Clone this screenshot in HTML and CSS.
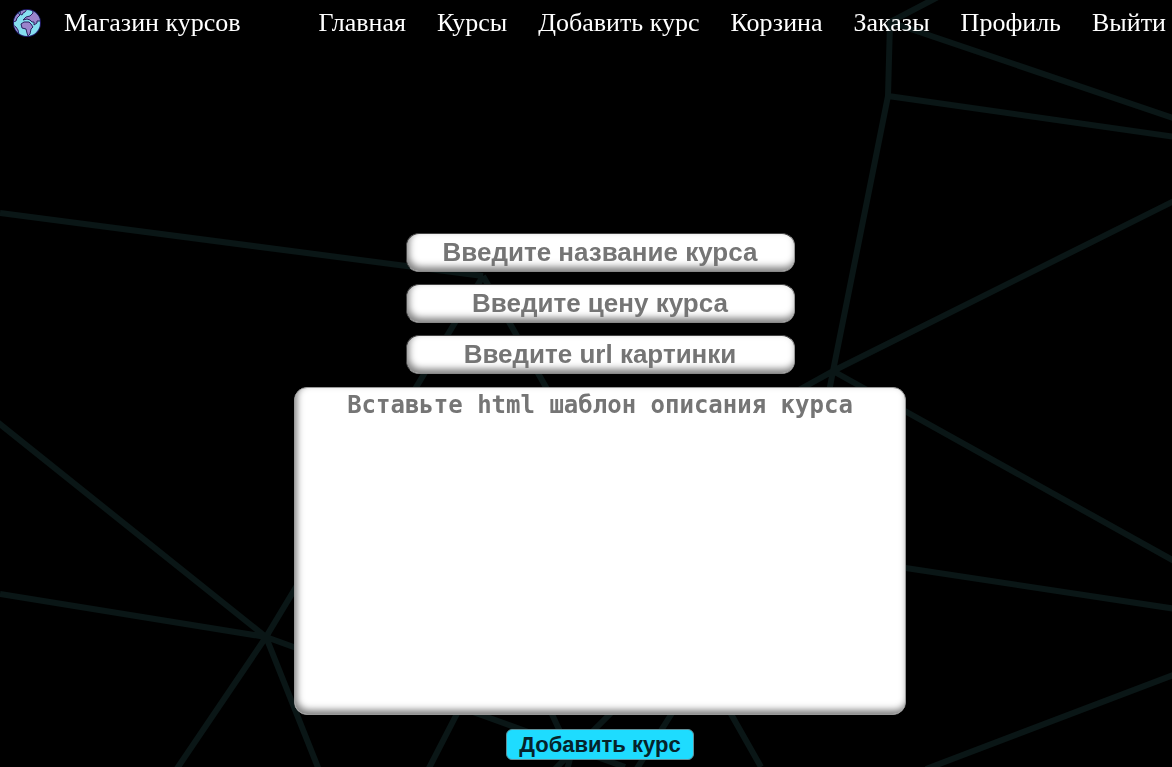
FILE: index.html
```html
<!DOCTYPE html>
<html lang="ru">
<head>
<meta charset="utf-8">
<title>Магазин курсов</title>
<link rel="stylesheet" href="styles.css">
</head>
<body>
<svg class="backdrop" viewBox="0 0 1172 767" preserveAspectRatio="xMidYMid slice" aria-hidden="true">
  <path d="M0 213L483 276M483 276L266 637M483 276L761 767M-4 421L266 637M0 594L266 637L176 770M266 637L319 770M266 637L625 767M464 700L428 770M550 710L571 755L567 770M612 712L555 769M674 710L636 770M938 -3L890 22L888 96L833 371L600 500M890 22L1176 119M888 96L1176 137M833 371L1176 200M833 371L1176 562M833 371L812 480M800 552L1176 609M1176 674L926 769"/>
</svg>
<header class="header">
  <a class="brand" href="#">
    <svg class="logo" viewBox="0 0 30 30" aria-hidden="true">
      <defs><clipPath id="globe"><circle cx="15" cy="15" r="13"/></clipPath></defs>
      <circle cx="15" cy="15" r="14" fill="#211c68"/>
      <circle cx="15" cy="15" r="13" fill="#86def0"/>
      <g clip-path="url(#globe)" fill="#9b84cc" stroke="#29205f" stroke-linejoin="round">
        <path d="M9 1L15 1L13 4L11 5L10 7L8 6Z"/>
        <path d="M2 7L6 5L8 7L5 10L4 13L1 14Z"/>
        <path d="M20 1L21 5L18 8L14 9L11 12L15 11L18 12L20 14L22 14L22 17L25 15L25 13L28 13L29 9L26 4Z"/>
        <path d="M9 16L12 14L17 14L19 16L21 19L19 21L18 26L16 28L15 25L14 21L10 20Z"/>
        <path d="M1 17L4 19L6 22L7 27L3 25Z"/>
      </g>
    </svg>
    <span>Магазин курсов</span>
  </a>
  <nav class="nav">
    <a href="#">Главная</a>
    <a href="#">Курсы</a>
    <a href="#">Добавить курс</a>
    <a href="#">Корзина</a>
    <a href="#">Заказы</a>
    <a href="#">Профиль</a>
    <a href="#">Выйти</a>
  </nav>
</header>
<main class="main">
  <form class="form">
    <input class="field" type="text" aria-label="Название курса" placeholder="Введите название курса">
    <input class="field" type="text" aria-label="Цена курса" placeholder="Введите цену курса">
    <input class="field" type="text" aria-label="URL картинки" placeholder="Введите url картинки">
    <textarea class="field template" aria-label="Описание курса" placeholder="Вставьте html шаблон описания курса"></textarea>
    <button class="submit" type="button">Добавить курс</button>
  </form>
</main>
</body>
</html>
```
FILE: styles.css
```css
* {
  box-sizing: border-box;
}

body {
  margin: 0;
  min-height: 100vh;
  background: #000;
  color: #fff;
  font-family: "Liberation Serif", "Times New Roman", serif;
}

.backdrop {
  position: fixed;
  inset: 0;
  z-index: -1;
  width: 100%;
  height: 100%;
}

.backdrop path {
  fill: none;
  stroke: #0a1616;
  stroke-width: 6;
}

.header {
  display: flex;
  justify-content: space-between;
  align-items: center;
  height: 46px;
  padding: 0 6px 0 12px;
  font-size: 26px;
  white-space: nowrap;
}

.header a {
  color: inherit;
  text-decoration: none;
}

.brand {
  display: flex;
  align-items: center;
  gap: 22px;
}

.logo {
  width: 30px;
  height: 30px;
}

.nav {
  display: flex;
  gap: 31px;
}

.main {
  padding: 187px 0 7px 28px;
}

.form {
  display: flex;
  flex-direction: column;
  align-items: center;
  gap: 12px;
}

.field {
  width: 389px;
  max-width: 100%;
  height: 39px;
  padding: 0 8px;
  border: 1px solid #444;
  border-right-color: #999;
  border-bottom-color: #888;
  border-radius: 13px;
  background: #fff;
  box-shadow: inset 2px -4px 7px rgba(0, 0, 0, 0.5);
  color: #222;
  font: bold 26px "Liberation Sans", Arial, sans-serif;
  text-align: center;
}

.field::placeholder {
  color: #757575;
  opacity: 1;
}

.template {
  width: 612px;
  height: 328px;
  margin-top: 1px;
  padding: 3px 8px;
  border-color: #999;
  font: bold 24px "DejaVu Sans Mono", monospace;
  resize: none;
}

.submit {
  height: 31px;
  margin-top: 2px;
  padding: 0 12px;
  border: 1px solid #5f8f98;
  border-radius: 6px;
  background: #1edcff;
  color: #06232a;
  font: bold 22px "Liberation Sans", Arial, sans-serif;
}
```
